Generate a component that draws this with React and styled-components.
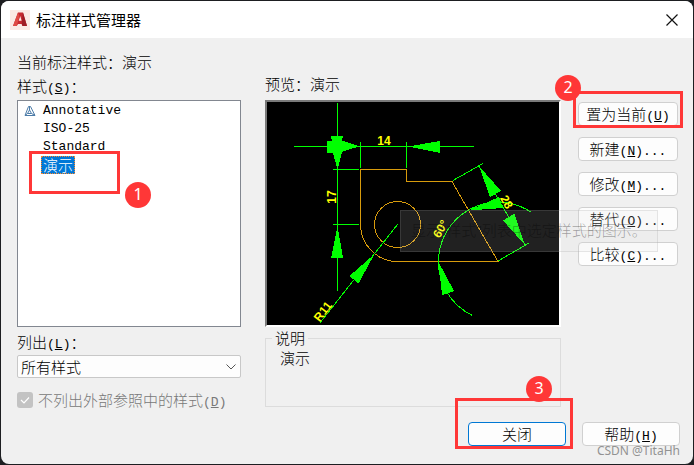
import React from "react";
import styled, { createGlobalStyle, css } from "styled-components";

const GlobalStyle = createGlobalStyle`
  *, *::before, *::after { box-sizing: border-box; }
  body {
    margin: 0;
    background: #1d1e21;
    color: #000;
    font: 300 15px/20px "Noto Sans CJK SC", sans-serif;
  }
`;

const Dialog = styled.div`
  display: flex;
  flex-direction: column;
  min-height: calc(100vh - 2px);
  margin: 1px;
  border-radius: 8px;
  background: #f0f0f0;
  overflow: hidden;
`;

const TitleBar = styled.header`
  display: flex;
  align-items: center;
  gap: 6px;
  height: 37px;
  padding: 0 14px 0 9px;
  background: #fff;
`;

const Title = styled.h1`
  flex: 1;
  margin: 0;
  font-size: 15px;
  font-weight: 400;
`;

const CloseIconButton = styled.button`
  display: flex;
  padding: 0;
  border: 0;
  background: none;
`;

const Content = styled.main`
  flex: 1;
  display: grid;
  grid-template-columns: 224px minmax(0, 1fr) 100px;
  grid-template-rows: auto minmax(227px, 1fr) auto;
  column-gap: 17px;
  padding: 14px 15px 0 16px;
`;

const Labels = styled.div`
  display: flex;
  flex-direction: column;
  justify-content: flex-end;
  gap: 4px;
  padding-bottom: ${(p) => p.$bottom}px;
  padding-left: ${(p) => p.$inset || 0}px;
`;

const Mono = styled.span`
  font-family: "Liberation Mono", monospace;
  font-size: 13px;
  font-weight: 400;
  line-height: 10px;
`;

const StyleList = styled.ul`
  margin: 0;
  padding: 1px 6px;
  border: 1px solid #828790;
  background: #fff;
  list-style: none;
`;

const StyleItem = styled.li`
  display: grid;
  grid-template-columns: 12px auto;
  justify-content: start;
  align-items: center;
  column-gap: 5px;
  height: 18px;
`;

const StyleName = styled.span`
  grid-column: 2;
  position: relative;
  padding: 0 2px;
  line-height: 18px;
  ${(p) =>
    p.$latin &&
    css`
      font: 400 13px/18px "Liberation Mono", monospace;
    `}
  ${(p) =>
    p.$selected &&
    css`
      outline: 1px dotted #ff8728;
      outline-offset: -1px;
      background: #0078d7;
      color: #fff;
    `}
`;

const Filters = styled.div`
  display: flex;
  flex-direction: column;
  padding-top: 5px;
`;

const Select = styled.select`
  appearance: none;
  grid-area: 1 / 1;
  width: 100%;
  height: 23px;
  padding: 0 24px 0 3px;
  border: 1px solid #c8c8c8;
  border-radius: 2px;
  background: #fdfdfd;
  color: #000;
  font: inherit;
  line-height: 20px;
`;

const SelectWrap = styled.div`
  display: grid;
  margin: 3px 0 12px;
  svg {
    grid-area: 1 / 1;
    place-self: center end;
    margin-right: 5px;
    pointer-events: none;
  }
`;

const CheckLabel = styled.label`
  display: flex;
  align-items: center;
  gap: 5px;
  color: #787878;
`;

const CheckBox = styled.input`
  appearance: none;
  width: 16px;
  height: 16px;
  margin: 0;
  border-radius: 3px;
  background: #c3c3c3
    url("data:image/svg+xml,%3Csvg xmlns='http://www.w3.org/2000/svg' viewBox='0 0 16 16'%3E%3Cpath d='M4 8l3 3 5-5.500' fill='none' stroke='%23fff' stroke-width='1.200'/%3E%3C/svg%3E");
`;

const Preview = styled.div`
  position: relative;
  margin-left: 7px;
  border: 2px solid;
  border-color: #7a7a7a #fff #fff #7a7a7a;
  background: #000;
`;

const Drawing = styled.svg`
  display: block;
  width: 100%;
  height: 100%;
`;

const GhostTip = styled.div`
  position: absolute;
  z-index: 1;
  left: 133px;
  top: 108px;
  height: 42px;
  padding: 0 10px;
  border: 1px solid rgba(150, 150, 150, 0.2);
  background: rgba(220, 220, 220, 0.15);
  color: rgba(0, 0, 0, 0.35);
  font: 300 15px/40px "Liberation Sans", "Noto Sans CJK SC", sans-serif;
  white-space: nowrap;
  pointer-events: none;
`;

const Description = styled.fieldset`
  min-width: 0;
  margin: 1px 0 3px 7px;
  padding: 0 14px 7px;
  border: 1px solid #dcdcdc;
`;

const Legend = styled.legend`
  margin-left: -8px;
  padding: 0 3px;
`;

const Actions = styled.div`
  display: flex;
  flex-direction: column;
  gap: 11px;
  padding-top: 2px;
`;

const Button = styled.button`
  width: 100%;
  height: 24px;
  padding: 0;
  border: 1px solid ${(p) => (p.$primary ? "#0078d4" : "#d0d0d0")};
  border-radius: 4px;
  background: #fdfdfd;
  color: #000;
  font: inherit;
  line-height: 20px;
`;

const Anchor = styled.div`
  position: relative;
  width: ${(p) => p.$width || "100%"};
  height: 24px;
`;

const Footer = styled.footer`
  display: flex;
  justify-content: flex-end;
  gap: 16px;
  padding: 12px 13px 18px;
`;

const Frame = styled.span`
  position: absolute;
  z-index: 2;
  inset: ${(p) => p.$inset};
  border: 3px solid #ff3737;
  pointer-events: none;
`;

const Badge = styled.span`
  position: absolute;
  z-index: 3;
  left: ${(p) => p.$left}px;
  top: ${(p) => p.$top}px;
  width: 26px;
  height: 26px;
  border-radius: 50%;
  background: #ff3737;
  color: #fff;
  font: 400 16px/25px "Noto Sans", sans-serif;
  text-align: center;
`;

const Watermark = styled.span`
  position: absolute;
  top: 20px;
  right: 0;
  color: #929292;
  font: 400 12px/18px "Noto Sans", sans-serif;
  white-space: nowrap;
`;

function Key({ letter, after = "" }) {
  return (
    <Mono>
      (<u>{letter}</u>){after}
    </Mono>
  );
}

function AppLogo() {
  return (
    <svg width="20" height="20" viewBox="0 0 20 20" aria-hidden="true">
      <rect width="20" height="20" fill="#fbe9e4" />
      <path d="M3 16 8 2.500h5L17 16h-4.500l-.8-2H8L6.800 16z" fill="#c5282f" />
      <path d="M8.700 10.800 10.300 6l1.300 4.800z" fill="#fbe9e4" />
      <path d="M3 16 8 2.500 9.500 6 6.800 16z" fill="#df4a45" />
      <path d="m13 2.500 4 13.500h-4.500l-.8-2z" fill="#9e1c25" />
    </svg>
  );
}

function AnnotativeIcon() {
  return (
    <svg width="12" height="12" viewBox="0 0 12 12" fill="none" stroke="#4d7ca8" aria-hidden="true">
      <path d="M4.500 1.500h2L11 10.500H1zM5.500 5 3.500 8.500h4zM5.500 1.500V5M1 10.500l2.500-2M11 10.500l-3.500-2" />
    </svg>
  );
}

function DimensionDrawing() {
  return (
    <Drawing viewBox="267 102 292 223" role="img" aria-label="预览">
      <g fill="none" stroke="#d79b0c" shapeRendering="crispEdges">
        <path d="M360.500 224.500V169.500H406.500V181.500H452L498 261.500H397.500A37 37 0 0 1 360.500 224.500" />
        <circle cx="397.500" cy="224.500" r="23" />
      </g>
      <g fill="none" stroke="#00ff00" shapeRendering="crispEdges">
        <path d="M337.500 103V291M294 146.500H474M360.500 142V168M406.500 142V168M333 169.500H359M333 224.500H359" />
        <path d="M397.500 224.500 319.500 323.500M453 180.500 483 163.500M479 166 525 245M498 261 529 243" />
        <path d="M472.500 315.500A59.500 59.500 0 0 1 438.500 261.500A59.500 59.500 0 0 1 531.500 212.500" />
      </g>
      <g fill="#00ff00" shapeRendering="crispEdges">
        <path d="M331 136H343L342 141H344L360 146.500 350 149 342 152 338 168H337L333 153H327V141H332z" />
        <path d="M408 146.500 440 141V153zM337.500 226 343 258H331z" />
        <path d="M374.500 254 349.500 276 358.500 283.500zM479 166 490 197 501 191z" />
        <path d="M525 245 503 220.500 514.500 213.500zM468.500 210.500 499 197 503 208z" />
        <path d="M438.500 262 442 295 454 291z" />
      </g>
      <g fill="#ffff00" fontFamily="Liberation Sans, sans-serif" fontWeight="700" fontSize="12" textAnchor="middle">
        <text x="384" y="145">14</text>
        <text transform="translate(336 197) rotate(-90)">17</text>
        <text transform="translate(326 314) rotate(-52)">R11</text>
        <text transform="translate(444 231) rotate(-60)">60°</text>
        <text transform="translate(503 204) rotate(60)">28</text>
      </g>
    </Drawing>
  );
}

const styles = ["Annotative", "ISO-25", "Standard"];

export default function App() {
  return (
    <>
      <GlobalStyle />
      <Dialog role="dialog" aria-labelledby="title">
        <TitleBar>
          <AppLogo />
          <Title id="title">标注样式管理器</Title>
          <CloseIconButton aria-label="关闭窗口">
            <svg width="14" height="14" viewBox="0 0 14 14" stroke="#111" strokeWidth="1.200" aria-hidden="true">
              <path d="m1.500 1.500 11 11m0-11-11 11" />
            </svg>
          </CloseIconButton>
        </TitleBar>
        <Content>
          <Labels $bottom={4}>
            <span>当前标注样式：演示</span>
            <span id="styles">
              样式<Key letter="S" />：
            </span>
          </Labels>
          <Labels $bottom={6} $inset={7}>
            <span>预览：演示</span>
          </Labels>
          <span />
          <StyleList role="listbox" aria-labelledby="styles">
            {styles.map((name, i) => (
              <StyleItem key={name} role="option" aria-selected="false">
                {i === 0 && <AnnotativeIcon />}
                <StyleName $latin>{name}</StyleName>
              </StyleItem>
            ))}
            <StyleItem role="option" aria-selected="true">
              <StyleName $selected>
                演示
                <Frame $inset="-5px -45px -20px -12px" />
                <Badge $left={84} $top={26}>1</Badge>
              </StyleName>
            </StyleItem>
          </StyleList>
          <Preview>
            <DimensionDrawing />
            <GhostTip>显示"样式"列表中选定样式的图示。</GhostTip>
          </Preview>
          <Actions>
            <Anchor>
              <Button>
                置为当前<Key letter="U" />
              </Button>
              <Frame $inset="-11px -5px -2px -5px" />
              <Badge $left={-23} $top={-27}>2</Badge>
            </Anchor>
            <Button>新建<Key letter="N" after="..." /></Button>
            <Button>修改<Key letter="M" after="..." /></Button>
            <Button>替代<Key letter="O" after="..." /></Button>
            <Button>比较<Key letter="C" after="..." /></Button>
          </Actions>
          <Filters>
            <label htmlFor="filter">
              列出<Key letter="L" />：
            </label>
            <SelectWrap>
              <Select id="filter">
                <option>所有样式</option>
              </Select>
              <svg width="10" height="6" viewBox="0 0 10 6" fill="none" stroke="#555" aria-hidden="true">
                <path d="m.5.5 4.500 4.500L9.500.5" />
              </svg>
            </SelectWrap>
            <CheckLabel>
              <CheckBox type="checkbox" defaultChecked disabled />
              <span>不列出外部参照中的样式<Key letter="D" /></span>
            </CheckLabel>
          </Filters>
          <Description>
            <Legend>说明</Legend>
            演示
          </Description>
        </Content>
        <Footer>
          <Anchor $width="98px">
            <Button $primary>关闭</Button>
            <Frame $inset="-24px -7px -3px -13px" />
            <Badge $left={58} $top={-46}>3</Badge>
          </Anchor>
          <Anchor $width="98px">
            <Button>
              帮助<Key letter="H" />
            </Button>
            <Watermark>CSDN @TitaHh</Watermark>
          </Anchor>
        </Footer>
      </Dialog>
    </>
  );
}
